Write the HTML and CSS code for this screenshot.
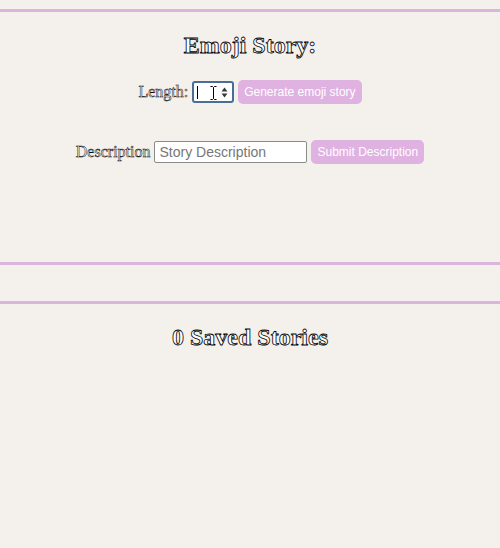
FILE: index.html
```html
<!DOCTYPE html>
<html>
<head>
<meta charset="utf-8">
<link rel="stylesheet" href="styles.css">
</head>
<body>
<div class="rule rule-top"></div>
<section class="maker">
  <h1 class="outlined title">Emoji Story:</h1>
  <div class="row row-length">
    <label class="outlined label">Length:</label>
    <div class="num-input">
      <span class="caret"></span>
      <svg class="ibeam" width="9" height="16" viewBox="0 0 9 16"><path d="M1.5 1.5h2l1 1 1-1h2M4.5 2.5v11M1.5 14.5h2l1-1 1 1h2" fill="none" stroke="#fff" stroke-width="2.2"/><path d="M1.5 1.5h2l1 1 1-1h2M4.5 2.5v11M1.5 14.5h2l1-1 1 1h2" fill="none" stroke="#000" stroke-width="1"/></svg>
      <svg class="spin" width="7" height="11" viewBox="0 0 7 11"><path d="M3.5 0.5L6.5 4.5H0.5Z M3.5 10.5L6.5 6.5H0.5Z" fill="#3a3a3a"/></svg>
    </div>
    <button class="btn">Generate emoji story</button>
  </div>
  <div class="row row-desc">
    <label class="outlined label">Description</label>
    <input class="text-input" type="text" placeholder="Story Description">
    <button class="btn btn-submit">Submit Description</button>
  </div>
</section>
<div class="rule rule-mid"></div>
<div class="rule rule-saved"></div>
<h2 class="outlined title saved">0 Saved Stories</h2>
</body>
</html>
```
FILE: styles.css
```css
html, body {
  margin: 0;
  padding: 0;
  background: #f4f0ec;
  font-family: "Liberation Serif", serif;
}
.rule {
  height: 3px;
  background: #dbb5dc;
}
.rule-top { margin-top: 9px; }
.outlined {
  color: #fff;
  -webkit-text-stroke: 0.8px #000;
}
.title {
  font-size: 24px;
  line-height: 28px;
  font-weight: bold;
  text-align: center;
  margin: 19px 0 0;
}
.row {
  display: flex;
  justify-content: center;
  align-items: center;
  gap: 4px;
  height: 24px;
}
.row-length { margin-top: 21px; }
.row-desc { margin-top: 36px; }
.label {
  font-size: 16px;
  -webkit-text-stroke: 0.5px #000;
}
.num-input {
  position: relative;
  box-sizing: border-box;
  width: 42px;
  height: 22px;
  border: 2px solid #4a6f97;
  border-radius: 3px;
  background: #fff;
}
.caret {
  position: absolute;
  left: 3px;
  top: 3px;
  width: 1px;
  height: 13px;
  background: #000;
}
.ibeam {
  position: absolute;
  left: 15px;
  top: 2px;
}
.spin {
  position: absolute;
  right: 4px;
  top: 4px;
}
.btn {
  height: 24px;
  padding: 0 6px;
  border: none;
  border-radius: 5px;
  background: #dfb2e1;
  color: #fff;
  font-family: "Liberation Sans", Arial, sans-serif;
  font-size: 12px;
}
.text-input {
  box-sizing: border-box;
  width: 153px;
  height: 22px;
  margin: 0;
  padding: 1px 4px;
  border: 1px solid #8b8b8b;
  border-radius: 2px;
  background: #fff;
  font-family: "Liberation Sans", Arial, sans-serif;
  font-size: 14px;
}
.text-input::placeholder { color: #777; }
.rule-mid { margin-top: 98px; }
.rule-saved { margin-top: 36px; }
.saved { margin-top: 19px; }
```
